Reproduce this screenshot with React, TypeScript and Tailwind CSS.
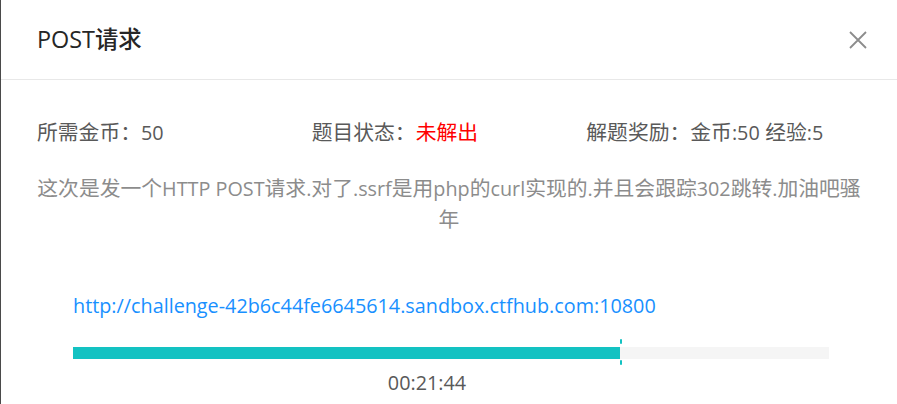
import React from 'react'

const font = { fontFamily: '"Open Sans", "Noto Sans CJK SC", sans-serif' }

// latin runs: Open Sans is wider than the original face, so set it a bit smaller
const L = ({ children }: { children: React.ReactNode }) => <span className="text-[19.8px]">{children}</span>

const ProgressBar = ({ percent }: { percent: number }) => {
  return (
    <div className="relative w-[756px] h-[12px] bg-[#f5f5f5]">
      <div className="h-full bg-[#13c2c2]" style={{ width: `${percent}%` }} />
      <div className="absolute top-[-8px] w-[2px] h-[5px] bg-[#13c2c2] rounded-[1px]" style={{ left: `${percent}%` }} />
      <div className="absolute top-[13px] w-[2px] h-[5px] bg-[#13c2c2] rounded-[1px]" style={{ left: `${percent}%` }} />
    </div>
  )
}

const App = () => {
  return (
    <div className="w-[897px] h-[404px] bg-white border-l border-[#4a4a4a] overflow-hidden" style={font}>
      <div className="h-[80px] flex items-center justify-between pl-[36px] pr-[28px] border-b border-[#e8e8e8]">
        <div className="text-[23.4px] font-medium text-[#262626] leading-none">POST请求</div>
        <button className="w-[22px] h-[22px] flex items-center justify-center text-[#8c8c8c]">
          <svg width="18" height="18" viewBox="0 0 18 18" fill="none" stroke="currentColor" strokeWidth="1.8">
            <path d="M1 1 L17 17 M17 1 L1 17" />
          </svg>
        </button>
      </div>
      <div className="px-[36px] pt-[37px]">
        <div className="grid grid-cols-3 text-[20.8px] leading-[31px] text-[#595959]">
          <div>所需金币：<L>50</L></div>
          <div>
            题目状态：<span className="text-[#ff0000]">未解出</span>
          </div>
          <div>解题奖励：金币<L>:50</L> 经验<L>:5</L></div>
        </div>
        <div className="mt-[25px] text-center text-[20.8px] leading-[31px] text-[#8c8c8c]">
          <div className="whitespace-nowrap">
            这次是发一个<L>HTTP POST</L>请求<L>.</L>对了<L>.ssrf</L>是用<L>php</L>的<L>curl</L>实现的<L>.</L>并且会跟踪<L>302</L>跳转<L>.</L>加油吧骚
          </div>
          <div>年</div>
        </div>
        <div className="pl-[36px] pt-[55px]">
          <div className="text-[19.8px] leading-[31px] text-[#1890ff]">
            http://challenge-42b6c44fe6645614.sandbox.ctfhub.com:10800
          </div>
          <div className="mt-[26px]">
            <ProgressBar percent={72.35} />
          </div>
          <div className="mt-[8px] w-[708px] text-center text-[19.8px] leading-[31px] text-[#595959]">00:21:44</div>
        </div>
      </div>
    </div>
  )
}

export default App
